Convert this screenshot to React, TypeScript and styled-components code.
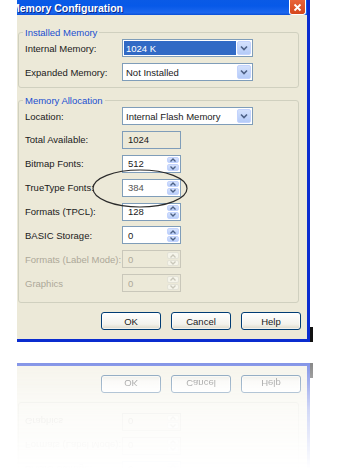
import React from 'react';
import styled, { createGlobalStyle } from 'styled-components';

const GlobalStyle = createGlobalStyle`
  html, body {
    margin: 0;
    background: #ffffff;
    font-family: 'Liberation Sans', Arial, sans-serif;
  }
  * {
    box-sizing: border-box;
  }
`;

const Page = styled.div`
  width: 342px;
  height: 469px;
  padding-left: 17px;
  display: flex;
  flex-direction: column;
  gap: 21px;
  overflow: hidden;
`;

const Window = styled.div`
  position: relative;
  width: 293px;
  height: 342px;
  flex-shrink: 0;
  background: #ece9d8;
  border-right: 3px solid #0a2ccf;
  border-bottom: 3px solid #0a2ccf;
  display: flex;
  flex-direction: column;
  &::after {
    content: '';
    position: absolute;
    right: -6px;
    bottom: -3px;
    width: 3px;
    height: 15px;
    background: #111;
  }
`;

const TitleBar = styled.div`
  height: 15px;
  flex-shrink: 0;
  display: flex;
  align-items: center;
  overflow: hidden;
  background: linear-gradient(#0a5ae6, #0759e8 40%, #1c67ee 85%, #0b4fd6);
`;

const Title = styled.div`
  margin-left: -6px;
  color: #fff;
  font-weight: bold;
  font-size: 10.5px;
  white-space: nowrap;
  text-shadow: 1px 1px 0 #0a2a8a;
`;

const CloseButton = styled.div`
  margin-left: auto;
  margin-right: 1px;
  width: 17px;
  height: 15px;
  border: 1px solid #fff;
  border-top: none;
  border-radius: 0 0 3px 3px;
  background: linear-gradient(#e8643a, #d5461c);
  display: flex;
  align-items: center;
  justify-content: center;
`;

const Body = styled.div`
  flex: 1;
  padding: 11px 8px 0 1px;
  display: flex;
  flex-direction: column;
`;

const Group = styled.fieldset<{ $gap: number; $bottom: number }>`
  margin: 0 0 6px 0;
  padding: 0 6px ${p => p.$bottom}px 6px;
  border: 1px solid #d0d0bf;
  border-radius: 3px;
  display: flex;
  flex-direction: column;
  gap: ${p => p.$gap}px;
`;

const Legend = styled.legend`
  margin-left: -2px;
  padding: 0 2px;
  color: #1a4fd0;
  font-size: 9.5px;
  line-height: 13px;
`;

const Row = styled.div`
  height: 18px;
  display: flex;
  align-items: center;
`;

const Label = styled.div<{ $disabled?: boolean }>`
  width: 97px;
  font-size: 9.5px;
  color: ${p => (p.$disabled ? '#aca899' : '#1a1a1a')};
  white-space: nowrap;
`;

const Select = styled.div`
  width: 131px;
  height: 18px;
  border: 1px solid #7f9db9;
  background: #fff;
  display: flex;
  padding: 1px;
`;

const SelectValue = styled.div<{ $selected?: boolean }>`
  flex: 1;
  padding-left: 2px;
  font-size: 9.5px;
  display: flex;
  align-items: center;
  color: ${p => (p.$selected ? '#fff' : '#1a1a1a')};
  background: ${p => (p.$selected ? '#316ac5' : 'transparent')};
`;

const DropButton = styled.div`
  width: 14px;
  margin-left: 1px;
  border-radius: 2px;
  background: linear-gradient(#d4e1fc, #b4cbf8);
  border: 1px solid #c3d3fd;
  display: flex;
  align-items: center;
  justify-content: center;
`;

const Box = styled.div<{ $disabled?: boolean; $readOnly?: boolean }>`
  width: 59px;
  height: 18px;
  padding: 1px;
  border: 1px solid ${p => (p.$disabled ? '#c9c7ba' : '#7f9db9')};
  background: ${p => (p.$disabled || p.$readOnly ? '#ece9d8' : '#fff')};
  display: flex;
`;

const BoxValue = styled.div<{ $disabled?: boolean; $muted?: boolean }>`
  flex: 1;
  padding-left: 4px;
  font-size: 9.5px;
  display: flex;
  align-items: center;
  color: ${p => (p.$disabled ? '#aca899' : p.$muted ? '#555' : '#1a1a1a')};
`;

const Spin = styled.div`
  width: 12px;
  display: flex;
  flex-direction: column;
  gap: 1px;
`;

const SpinHalf = styled.div<{ $disabled?: boolean }>`
  flex: 1;
  border-radius: 2px;
  background: ${p =>
    p.$disabled ? '#f5f4ea' : 'linear-gradient(#d6e2fc, #b9cef9)'};
  border: 1px solid ${p => (p.$disabled ? '#e3e2d7' : '#c3d3fd')};
  display: flex;
  align-items: center;
  justify-content: center;
`;

const ButtonRow = styled.div`
  margin-top: 3px;
  margin-right: -2px;
  display: flex;
  justify-content: flex-end;
  gap: 10px;
`;

const Button = styled.div`
  width: 60px;
  height: 18px;
  border: 1px solid #003c74;
  border-radius: 3px;
  background: linear-gradient(#ffffff, #f3f2ec 70%, #dcd8c8);
  box-shadow: inset 0 0 0 1px rgba(255, 255, 255, 0.6);
  font-size: 9.5px;
  color: #1a1a1a;
  display: flex;
  align-items: center;
  justify-content: center;
`;

const Circle = styled.svg`
  position: absolute;
  left: 74px;
  top: 168px;
  pointer-events: none;
`;

const ReflectionClip = styled.div`
  height: 106px;
  overflow: hidden;
  flex-shrink: 0;
  opacity: 0.5;
  -webkit-mask-image: linear-gradient(to bottom, #000, rgba(0, 0, 0, 0.35) 45%, transparent 100%);
  mask-image: linear-gradient(to bottom, #000, rgba(0, 0, 0, 0.35) 45%, transparent 100%);
`;

const Mirror = styled.div`
  height: 342px;
  transform: scaleY(-1);
`;

const Chevron = () => (
  <svg width="8" height="6" viewBox="0 0 8 6">
    <path d="M1 1.5 L4 4.5 L7 1.5" fill="none" stroke="#4d6185" strokeWidth="1.6" />
  </svg>
);

const Arrow = ({ up, disabled }: { up?: boolean; disabled?: boolean }) => (
  <svg width="6" height="4" viewBox="0 0 6 4">
    <path
      d={up ? 'M0.5 3.5 L3 1 L5.5 3.5' : 'M0.5 0.5 L3 3 L5.5 0.5'}
      fill="none"
      stroke={disabled ? '#c9c7ba' : '#4d6185'}
      strokeWidth="1.3"
    />
  </svg>
);

interface BoxRow {
  label: string;
  value: string;
  spin?: boolean;
  disabled?: boolean;
  readOnly?: boolean;
  muted?: boolean;
}

const allocRows: BoxRow[] = [
  { label: 'Total Available:', value: '1024', readOnly: true },
  { label: 'Bitmap Fonts:', value: '512', spin: true },
  { label: 'TrueType Fonts:', value: '384', spin: true, muted: true },
  { label: 'Formats (TPCL):', value: '128', spin: true },
  { label: 'BASIC Storage:', value: '0', spin: true },
  { label: 'Formats (Label Mode):', value: '0', spin: true, disabled: true },
  { label: 'Graphics', value: '0', spin: true, disabled: true },
];

const Dialog = ({ mark }: { mark?: boolean }) => (
  <Window>
    <TitleBar>
      <Title>Memory Configuration</Title>
      <CloseButton>
        <svg width="9" height="9" viewBox="0 0 9 9">
          <path d="M1.5 1.5 L7.5 7.5 M7.5 1.5 L1.5 7.5" stroke="#fff" strokeWidth="1.8" />
        </svg>
      </CloseButton>
    </TitleBar>
    <Body>
      <Group $gap={6} $bottom={6}>
        <Legend>Installed Memory</Legend>
        <Row>
          <Label>Internal Memory:</Label>
          <Select>
            <SelectValue $selected>1024 K</SelectValue>
            <DropButton>
              <Chevron />
            </DropButton>
          </Select>
        </Row>
        <Row>
          <Label>Expanded Memory:</Label>
          <Select>
            <SelectValue>Not Installed</SelectValue>
            <DropButton>
              <Chevron />
            </DropButton>
          </Select>
        </Row>
      </Group>
      <Group $gap={5.9} $bottom={10}>
        <Legend>Memory Allocation</Legend>
        <Row>
          <Label>Location:</Label>
          <Select>
            <SelectValue>Internal Flash Memory</SelectValue>
            <DropButton>
              <Chevron />
            </DropButton>
          </Select>
        </Row>
        {allocRows.map(r => (
          <Row key={r.label}>
            <Label $disabled={r.disabled}>{r.label}</Label>
            <Box $disabled={r.disabled} $readOnly={r.readOnly}>
              <BoxValue $disabled={r.disabled} $muted={r.muted}>
                {r.value}
              </BoxValue>
              {r.spin && (
                <Spin>
                  <SpinHalf $disabled={r.disabled}>
                    <Arrow up disabled={r.disabled} />
                  </SpinHalf>
                  <SpinHalf $disabled={r.disabled}>
                    <Arrow disabled={r.disabled} />
                  </SpinHalf>
                </Spin>
              )}
            </Box>
          </Row>
        ))}
      </Group>
      <ButtonRow>
        <Button>OK</Button>
        <Button>Cancel</Button>
        <Button>Help</Button>
      </ButtonRow>
    </Body>
    {mark && (
      <Circle width="98" height="42" viewBox="0 0 98 42">
        <ellipse cx="49" cy="20.5" rx="47" ry="18.5" fill="none" stroke="#2a2a2a" strokeWidth="1.2" />
      </Circle>
    )}
  </Window>
);

export default function App() {
  return (
    <>
      <GlobalStyle />
      <Page>
        <Dialog mark />
        <ReflectionClip aria-hidden>
          <Mirror>
            <Dialog />
          </Mirror>
        </ReflectionClip>
      </Page>
    </>
  );
}
